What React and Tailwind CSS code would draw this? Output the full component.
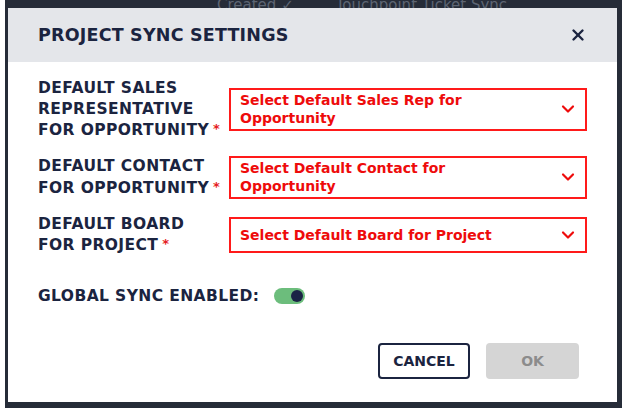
import { ChevronDown, X } from 'lucide-react';

const font = { fontFamily: '"DejaVu Sans", "Noto Sans", sans-serif' };

function Field({ lines, placeholder }) {
  return (
    <div className="flex items-center">
      <div className="w-[191px] shrink-0 pr-[6px] text-[15.5px] leading-[20.5px] font-bold tracking-[0.4px] text-[#1b2440] uppercase">
        {lines.map((l, i) => (
          <div key={i} className="whitespace-nowrap">
            {l}
            {i === lines.length - 1 && <span className="text-[#e51c23] text-[13px] ml-[4px] align-[2px]">*</span>}
          </div>
        ))}
      </div>
      <button type="button"
        className="flex-1 min-h-[36px] border-2 border-[#ff1a1a] flex items-center justify-between pl-[9px] pr-[7px] py-[1.5px] text-left">
        <span className="w-[290px] text-[14px] leading-[18px] font-bold text-[#ee0b0b]">{placeholder}</span>
        <ChevronDown size={20} strokeWidth={2.6} className="text-[#ee0b0b] shrink-0" />
      </button>
    </div>
  );
}

export default function App() {
  return (
    <div className="w-[627px] h-[415px] bg-white" style={font}>
      <div className="ml-[5px] w-[617px] h-[408px] bg-[#262c38] pl-[3px] pr-[5px] pb-[6px] flex flex-col">
        {/* page behind the overlay */}
        <div className="h-[8px] overflow-hidden flex items-end text-[15px] leading-[16px] text-[#5d6573] whitespace-nowrap">
          <span className="ml-[209px] translate-y-[5px]">Created ✓</span>
          <span className="ml-[42px] translate-y-[5px]">Touchpoint Ticket Sync...</span>
        </div>

        <div className="flex-1 bg-white flex flex-col">
          <div className="h-[54px] bg-[#e4e6ea] flex items-center justify-between pl-[30px] pr-[30px]">
            <h2 className="text-[17.5px] font-bold tracking-[0.2px] text-[#1b2440]">PROJECT SYNC SETTINGS</h2>
            <X size={18} strokeWidth={3.2} className="text-[#1b2440]" />
          </div>

          <div className="flex-1 flex flex-col px-[30px] pt-[16px] pb-[23px]">
            <div className="flex flex-col gap-[15px]">
              <Field lines={['Default Sales', 'Representative', 'For Opportunity']}
                placeholder="Select Default Sales Rep for Opportunity" />
              <Field lines={['Default Contact', 'For Opportunity']}
                placeholder="Select Default Contact for Opportunity" />
              <Field lines={['Default Board', 'For Project']}
                placeholder="Select Default Board for Project" />
            </div>

            <div className="flex items-center gap-[15px] mt-[29px]">
              <span className="text-[15.5px] font-bold tracking-[0.4px] text-[#1b2440]">GLOBAL SYNC ENABLED:</span>
              <div className="w-[31px] h-[16px] rounded-full bg-[#6cbd7c] flex items-center justify-end pr-[2px]">
                <div className="w-[12px] h-[12px] rounded-full bg-[#1b2446]" />
              </div>
            </div>

            <div className="mt-auto flex justify-end gap-[16px] pr-[8px]">
              <button type="button"
                className="w-[92px] h-[36px] rounded-[4px] border-2 border-[#1b2440] text-[14px] font-bold text-[#1b2440]">
                CANCEL
              </button>
              <button type="button" disabled
                className="w-[93px] h-[36px] rounded-[4px] bg-[#d5d5d5] text-[14px] font-bold text-[#8c8c8c]">
                OK
              </button>
            </div>
          </div>
        </div>
      </div>
    </div>
  );
}
